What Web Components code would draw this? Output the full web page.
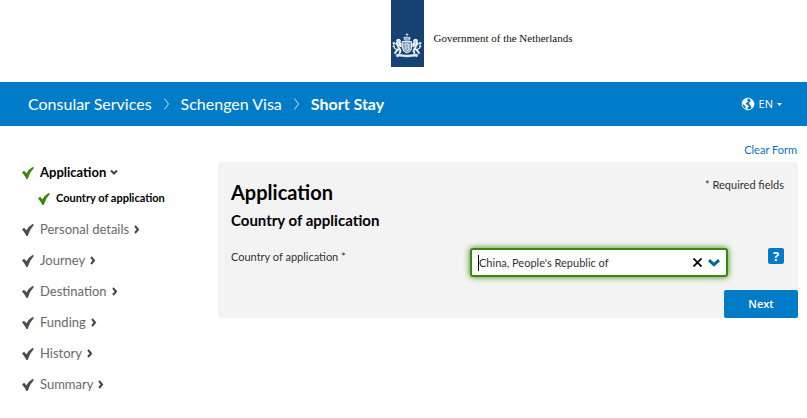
<!DOCTYPE html>
<html lang="en">
<head>
<meta charset="utf-8">
<meta name="viewport" content="width=device-width, initial-scale=1">
<title>Schengen Visa - Short Stay</title>
<style>
  body {
    margin: 0;
    background: #fff;
    color: #000;
    font-family: Lato, "Noto Sans", sans-serif;
    font-size: 13px;
    --blue: #007bc7;
    --green: #39870c;
    --text: #333;
  }
</style>
</head>
<body>
<visa-app></visa-app>

<script>
class SiteLogo extends HTMLElement {
  constructor() {
    super();
    this.attachShadow({ mode: "open" });
    this.shadowRoot.innerHTML = `
      <style>
        :host {
          display: grid;
          grid-template-columns: 1fr auto 1fr;
          column-gap: 10px;
          height: 82px;
          padding: 0 9px 0 16px;
        }
        .ribbon {
          grid-column: 2;
          display: flex;
          align-items: flex-end;
          justify-content: center;
          box-sizing: border-box;
          width: 33px;
          height: 67px;
          padding-bottom: 9px;
          background: #154273;
        }
        .name {
          padding-top: 30px;
          font-family: "Liberation Serif", serif;
          font-size: 11px;
          line-height: 16px;
          white-space: nowrap;
          color: #111;
        }
      </style>
      <div class="ribbon">
        <svg width="30" height="25" viewBox="0 0 30 25" fill="none" stroke="#e6edf4" stroke-linecap="round" stroke-linejoin="round" aria-hidden="true">
          <path d="M15 .6v2M14 1.500h2" stroke-width=".8"/>
          <path d="M12.500 6.800 11.800 4.600q1.300-1.200 2.200.2Q15 2.500 16 4.800q.9-1.400 2.200-.2l-.7 2.200z" fill="#8fa8c4" stroke-width=".8"/>
          <path d="M10.500 8.500h9v7q0 3-4.500 4.500-4.500-1.500-4.500-4.500z" fill="#8ba5c2" stroke-width="1"/>
          <path d="M13 11.500l1.500-.8 2.500 1.300-1 2 1.500 2-2 1.500M13 13.500l1.500 1-1.500 2" stroke-width="1"/>
          <g id="lion" stroke-width="2">
            <path d="M5 7.500q2-1.500 3 .4l-.8 1.700 1.800 1.600M5.500 8.500q-1.500 2 .3 4l1.200 3-2.500 2.500-1.500 2M7 15l1.500 2.500-.8 2.500M6.500 11.500l2.500 1.700"/>
            <path d="M4.500 16.500q-2.500-1-2.500-3.500t-1-3M2 9.500l1.300 1.300M1 13.500l1.500.5" stroke-width="1.200"/>
          </g>
          <use href="#lion" transform="matrix(-1 0 0 1 30 0)"/>
          <path d="M4 21.500q2-.8 4-.2 7 1.600 14 0 2-.6 4 .2l-1 2.500-2.500-.8q-7.500 1.600-15 0L5 24z" fill="#e6edf4" stroke-width=".4"/>
        </svg>
      </div>
      <div class="name"><slot></slot></div>
    `;
  }
}

class CrumbBar extends HTMLElement {
  constructor() {
    super();
    this.attachShadow({ mode: "open" });
    this.shadowRoot.innerHTML = `
      <style>
        :host {
          display: flex;
          align-items: center;
          justify-content: space-between;
          height: 44px;
          padding: 0 25px 0 28px;
          background: var(--blue);
          color: #fff;
        }
        nav {
          display: flex;
          align-items: center;
          gap: 12px;
          font-size: 16px;
          line-height: 24px;
          white-space: nowrap;
        }
        a {
          color: inherit;
          text-decoration: none;
        }
        strong {
          font-weight: 700;
        }
        button {
          display: flex;
          align-items: center;
          gap: 4px;
          padding: 0;
          border: 0;
          background: none;
          color: inherit;
          font: 500 11px/16px "Open Sans", "Noto Sans", sans-serif;
        }
      </style>
      <nav aria-label="Breadcrumb">
        <a href="#services">Consular Services</a>
        <svg width="5" height="12" viewBox="0 0 5 12" fill="none" stroke="#cfe5f4"><path d="M.5.500 4.500 6 .5 11.500"/></svg>
        <a href="#schengen">Schengen Visa</a>
        <svg width="5" height="12" viewBox="0 0 5 12" fill="none" stroke="#cfe5f4"><path d="M.5.500 4.500 6 .5 11.500"/></svg>
        <strong>Short Stay</strong>
      </nav>
      <button type="button" aria-haspopup="true">
        <svg width="14" height="14" viewBox="0 0 15 14" aria-hidden="true">
          <circle cx="7.500" cy="7" r="6.300" fill="none" stroke="#fff"/>
          <path d="M1 5.500Q2 1.500 6 .8l1.500.7L6.500 3 8 4.200 6 5.500 5 7l2 1 1.500 1.500L7 11.500 6.500 13 5 12 4.500 9 2.500 7.500zM9.500 2l2 .3L14 6v3l-1.500 2.500-1.500-.5L10.500 8.500 9 7.500 8.700 5.500 10.500 4z" fill="#fff"/>
        </svg>
        <span>EN</span>
        <svg width="5" height="3" viewBox="0 0 5 3" fill="#fff" aria-hidden="true"><path d="M0 0h5L2.500 3z"/></svg>
      </button>
    `;
  }
}

class StepItem extends HTMLElement {
  constructor() {
    super();
    this.attachShadow({ mode: "open" });
  }

  connectedCallback() {
    const open = this.hasAttribute("open");
    const sub = this.hasAttribute("sub");
    const arrow = open ? "M1 2.500 4 5.500 7 2.500" : "M2 1 5 4.500 2 8";
    this.shadowRoot.innerHTML = `
      <style>
        :host {
          display: flex;
          align-items: center;
          height: 31px;
          color: #696969;
          --tick: #4d4d4d;
        }
        :host([open]), :host([sub]) {
          color: #000;
          font-weight: 700;
          --tick: var(--green);
        }
        :host([open]) {
          height: 20px;
        }
        :host([sub]) {
          padding-left: 16px;
        }
        a {
          display: flex;
          align-items: center;
          color: inherit;
          font-size: 13px;
          line-height: 18px;
          text-decoration: none;
          white-space: nowrap;
        }
        :host([sub]) a {
          font-size: 11px;
        }
        .tick {
          margin: 2px 6px 0 0;
          fill: var(--tick);
        }
        .arrow {
          margin: 1px 0 0 4px;
          stroke: #444;
        }
      </style>
      <a href="#step">
        <svg class="tick" width="12" height="12" viewBox="0 0 12 12"><path d="M0 5.500 2 3.700 4.500 6.300Q7 2 10.500 0L12 .8Q8 5 5.700 12H4.500Q2.500 8 0 5.500z"/></svg>
        <span><slot></slot></span>
        ${sub ? "" : `<svg class="arrow" width="8" height="9" viewBox="0 0 8 9" fill="none" stroke-width="2"><path d="${arrow}"/></svg>`}
      </a>
    `;
  }
}

class CountryField extends HTMLElement {
  constructor() {
    super();
    this.attachShadow({ mode: "open" });
  }

  connectedCallback() {
    this.shadowRoot.innerHTML = `
      <style>
        :host {
          display: grid;
          grid-template-columns: 239px 1fr 56px;
          align-items: start;
          color: var(--text);
        }
        label {
          font-size: 11px;
          line-height: 18px;
        }
        .combo {
          display: flex;
          align-items: center;
          gap: 6px;
          box-sizing: border-box;
          height: 29px;
          padding: 0 6px;
          border: 2px solid var(--green);
          border-radius: 3px;
          background: #fff;
          box-shadow: 0 0 6px var(--green);
        }
        input {
          flex: 1;
          min-width: 0;
          height: 16px;
          box-sizing: border-box;
          padding: 0;
          border: 0;
          border-left: 1px solid #000;
          outline: 0;
          background: none;
          color: var(--text);
          font: 11px/16px Lato, "Noto Sans", sans-serif;
        }
        button {
          display: flex;
          align-items: center;
          justify-content: center;
          padding: 0;
          border: 0;
          background: none;
        }
        .help {
          justify-self: end;
          width: 16px;
          height: 16px;
          border-radius: 2px;
          background: var(--blue);
          color: #fff;
          font: 700 13px/16px "Noto Sans", sans-serif;
        }
      </style>
      <label for="country"><slot></slot></label>
      <div class="combo">
        <input id="country" type="text" role="combobox" aria-expanded="false" value="${this.getAttribute("value") || ""}">
        <button type="button" class="clear" aria-label="Clear">
          <svg width="9" height="9" viewBox="0 0 9 9" stroke="#000" stroke-width="1.800"><path d="M.5.500 8.500 8.500M8.500.500.5 8.500"/></svg>
        </button>
        <button type="button" class="toggle" aria-label="Show options">
          <svg width="12" height="8" viewBox="0 0 12 8" fill="none" stroke="#01689b" stroke-width="3"><path d="M1 1.200 6 5.700 11 1.200"/></svg>
        </button>
      </div>
      <button type="button" class="help" aria-label="Help">?</button>
    `;
    this.shadowRoot.querySelector(".clear").addEventListener("click", () => {
      const input = this.shadowRoot.querySelector("input");
      input.value = "";
      input.focus();
    });
  }
}

class FormPanel extends HTMLElement {
  constructor() {
    super();
    this.attachShadow({ mode: "open" });
    this.shadowRoot.innerHTML = `
      <style>
        :host {
          display: block;
          border-radius: 3px;
          background: #f3f3f3;
        }
        .content {
          padding: 14px 14px 0 13px;
        }
        header {
          display: flex;
          justify-content: space-between;
          align-items: flex-start;
        }
        h1, h2 {
          margin: 0;
          font-weight: 700;
        }
        h1 {
          font-size: 20px;
          line-height: 32px;
        }
        h2 {
          margin-bottom: 16px;
          font-size: 15px;
          line-height: 24px;
        }
        .required {
          font-size: 11px;
          line-height: 18px;
          color: var(--text);
        }
        footer {
          display: flex;
          justify-content: flex-end;
          padding-top: 13px;
        }
        footer button {
          width: 74px;
          height: 28px;
          padding: 0;
          border: 0;
          border-radius: 2px;
          background: var(--blue);
          color: #fff;
          font: 600 11px/28px "Open Sans", "Noto Sans", sans-serif;
        }
      </style>
      <div class="content">
        <header>
          <h1><slot name="title"></slot></h1>
          <span class="required">* Required fields</span>
        </header>
        <h2><slot name="subtitle"></slot></h2>
        <slot></slot>
      </div>
      <footer><button type="button">Next</button></footer>
    `;
  }
}

class VisaApp extends HTMLElement {
  constructor() {
    super();
    this.attachShadow({ mode: "open" });
    this.shadowRoot.innerHTML = `
      <style>
        :host {
          display: block;
        }
        .tools {
          display: flex;
          justify-content: flex-end;
          padding: 15px 10px 3px;
        }
        .tools a {
          color: #0b71b8;
          font-size: 11px;
          line-height: 18px;
          text-decoration: none;
        }
        main {
          display: grid;
          grid-template-columns: 196px 1fr;
          align-items: start;
          padding: 0 9px 0 22px;
        }
      </style>
      <site-logo>Government of the Netherlands</site-logo>
      <crumb-bar></crumb-bar>
      <div class="tools"><a href="#clear">Clear Form</a></div>
      <main>
        <nav aria-label="Steps">
          <step-item open>Application</step-item>
          <step-item sub>Country of application</step-item>
          <step-item>Personal details</step-item>
          <step-item>Journey</step-item>
          <step-item>Destination</step-item>
          <step-item>Funding</step-item>
          <step-item>History</step-item>
          <step-item>Summary</step-item>
        </nav>
        <form-panel>
          <span slot="title">Application</span>
          <span slot="subtitle">Country of application</span>
          <country-field value="China, People's Republic of">Country of application *</country-field>
        </form-panel>
      </main>
    `;
  }
}

customElements.define("site-logo", SiteLogo);
customElements.define("crumb-bar", CrumbBar);
customElements.define("step-item", StepItem);
customElements.define("country-field", CountryField);
customElements.define("form-panel", FormPanel);
customElements.define("visa-app", VisaApp);
</script>
</body>
</html>
